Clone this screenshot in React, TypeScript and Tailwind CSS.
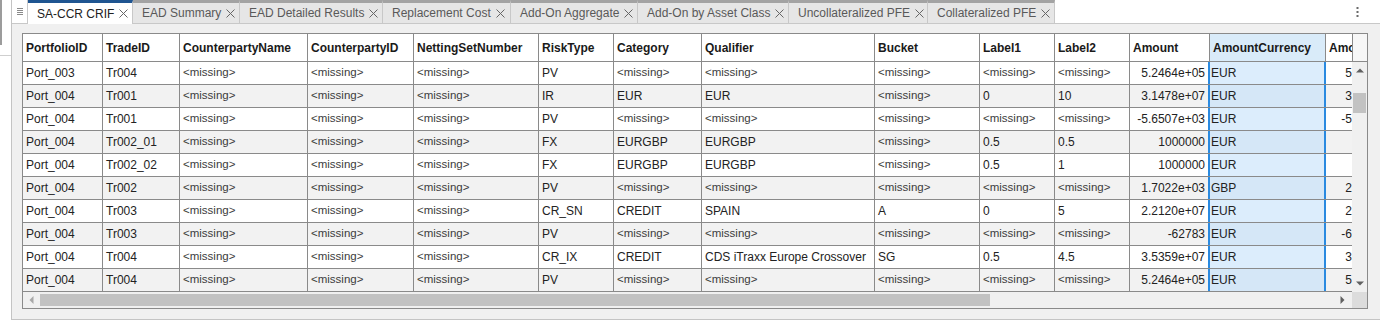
type Tab = { label: string; width: string; active?: boolean }

const tabs: Tab[] = [
  { label: 'SA-CCR CRIF', width: 'w-[105px]', active: true },
  { label: 'EAD Summary', width: 'w-[107px]' },
  { label: 'EAD Detailed Results', width: 'w-[143px]' },
  { label: 'Replacement Cost', width: 'w-[128px]' },
  { label: 'Add-On Aggregate', width: 'w-[127px]' },
  { label: 'Add-On by Asset Class', width: 'w-[151px]' },
  { label: 'Uncollateralized PFE', width: 'w-[139px]' },
  { label: 'Collateralized PFE', width: 'w-[127px]' }
]

type Column = { name: string; width: string; right?: boolean }

const columns: Column[] = [
  { name: 'PortfolioID', width: 'w-[80px]' },
  { name: 'TradeID', width: 'w-[77px]' },
  { name: 'CounterpartyName', width: 'w-[128px]' },
  { name: 'CounterpartyID', width: 'w-[106px]' },
  { name: 'NettingSetNumber', width: 'w-[125px]' },
  { name: 'RiskType', width: 'w-[75px]' },
  { name: 'Category', width: 'w-[88px]' },
  { name: 'Qualifier', width: 'w-[173px]' },
  { name: 'Bucket', width: 'w-[105px]' },
  { name: 'Label1', width: 'w-[75px]' },
  { name: 'Label2', width: 'w-[75px]' },
  { name: 'Amount', width: 'w-[80px]', right: true },
  { name: 'AmountCurrency', width: 'w-[116px]' },
  { name: 'AmountInBaseCurrency', width: 'w-[87px]', right: true }
]

const SELECTED = 12
const M = null

const rows: (string | null)[][] = [
  ['Port_003', 'Tr004', M, M, M, 'PV', M, M, M, M, M, '5.2464e+05', 'EUR', '5.2464e+05'],
  ['Port_004', 'Tr001', M, M, M, 'IR', 'EUR', 'EUR', M, '0', '10', '3.1478e+07', 'EUR', '3.1478e+07'],
  ['Port_004', 'Tr001', M, M, M, 'PV', M, M, M, M, M, '-5.6507e+03', 'EUR', '-5.6507e+03'],
  ['Port_004', 'Tr002_01', M, M, M, 'FX', 'EURGBP', 'EURGBP', M, '0.5', '0.5', '1000000', 'EUR', '1000000'],
  ['Port_004', 'Tr002_02', M, M, M, 'FX', 'EURGBP', 'EURGBP', M, '0.5', '1', '1000000', 'EUR', '1000000'],
  ['Port_004', 'Tr002', M, M, M, 'PV', M, M, M, M, M, '1.7022e+03', 'GBP', '2.0062e+03'],
  ['Port_004', 'Tr003', M, M, M, 'CR_SN', 'CREDIT', 'SPAIN', 'A', '0', '5', '2.2120e+07', 'EUR', '2.2120e+07'],
  ['Port_004', 'Tr003', M, M, M, 'PV', M, M, M, M, M, '-62783', 'EUR', '-6.2783e+04'],
  ['Port_004', 'Tr004', M, M, M, 'CR_IX', 'CREDIT', 'CDS iTraxx Europe Crossover', 'SG', '0.5', '4.5', '3.5359e+07', 'EUR', '3.5359e+07'],
  ['Port_004', 'Tr004', M, M, M, 'PV', M, M, M, M, M, '5.2464e+05', 'EUR', '5.2464e+05']
]

function Arrow({ dir, light }: { dir: 'up' | 'down' | 'left' | 'right'; light?: boolean }) {
  const fill = light ? '#a8a8a8' : '#606060'
  if (dir === 'up' || dir === 'down') {
    return (
      <svg width="8" height="5" viewBox="0 0 8 5">
        <polygon points={dir === 'up' ? '0,4.5 8,4.5 4,0.5' : '0,0.5 8,0.5 4,4.5'} fill={fill} />
      </svg>
    )
  }
  return (
    <svg width="5" height="8" viewBox="0 0 5 8">
      <polygon points={dir === 'left' ? '4.5,0 4.5,8 0.5,4' : '0.5,0 0.5,8 4.5,4'} fill={fill} />
    </svg>
  )
}

function CloseGlyph() {
  return (
    <svg width="9" height="9" viewBox="0 0 9 9" className="shrink-0">
      <g stroke="#666" strokeWidth="1">
        <line x1="0.5" y1="0.5" x2="8.5" y2="8.5" />
        <line x1="8.5" y1="0.5" x2="0.5" y2="8.5" />
      </g>
    </svg>
  )
}

function Cell({ value, col, index, even }: { value: string | null; col: Column; index: number; even: boolean }) {
  const selected = index === SELECTED
  let bg = even ? 'bg-[#f2f2f2]' : 'bg-white'
  if (selected) bg = even ? 'bg-[#d5e7f7]' : 'bg-[#dcedfc]'
  let border = 'border-r border-[#8a8a8a]'
  if (index === SELECTED - 1 || selected) border = 'border-r-2 border-r-[#2a8ae0]'
  return (
    <div
      className={`flex h-full shrink-0 items-center overflow-hidden whitespace-nowrap ${col.width} ${bg} ${border} ${
        col.right ? 'justify-end pr-[3px]' : selected ? 'pl-[1px]' : 'pl-[3px]'
      }`}
    >
      {value === null ? (
        <span className="text-[11.5px] text-[#3c3c3c]">&lt;missing&gt;</span>
      ) : (
        <span className="text-[12px] text-[#222]">{value}</span>
      )}
    </div>
  )
}

export default function App() {
  return (
    <div className="flex h-[321px] w-[1380px] bg-white font-['Liberation_Sans',Arial,sans-serif]">
      {/* fragment of neighbouring panel */}
      <div className="flex w-[11px] shrink-0 flex-col">
        <div className="h-[45px] border-l-2 border-[#9c9c9c]" />
        <div className="h-[10px]" />
        <div className="border-t border-[#cfcfcf]" />
      </div>

      <div className="flex h-[320px] flex-1 flex-col border-b border-l border-[#c4c4c4]">
        {/* Tab bar */}
        <div className="flex h-[24px] shrink-0 items-stretch">
          <div className="flex w-[16px] shrink-0 items-center justify-center border-r border-b border-[#c8c8c8]">
            <svg width="6" height="8" viewBox="0 0 6 8">
              <g stroke="#8a8a8a" strokeWidth="1">
                <line x1="0" y1="0.5" x2="6" y2="0.5" />
                <line x1="0" y1="2.5" x2="6" y2="2.5" />
                <line x1="0" y1="4.5" x2="6" y2="4.5" />
                <line x1="0" y1="6.5" x2="6" y2="6.5" />
              </g>
            </svg>
          </div>
          {tabs.map((tab) => (
            <div
              key={tab.label}
              className={`flex shrink-0 items-center gap-[5px] border-t-[3px] border-r border-r-[#c8c8c8] pl-[9px] text-[12px] ${tab.width} ${
                tab.active
                  ? 'border-t-[#1f5591] bg-white text-[#212121]'
                  : 'border-b border-b-[#c8c8c8] border-t-[#a3a3a3] bg-[#e6e6e6] text-[#595959]'
              }`}
            >
              <span className="whitespace-nowrap">{tab.label}</span>
              <CloseGlyph />
            </div>
          ))}
          <div className="flex flex-1 items-center justify-end border-b border-[#c8c8c8] pr-[21px]">
            <svg width="3" height="12" viewBox="0 0 3 12">
              <g fill="#6a6a6a">
                <rect x="0.5" y="1" width="2" height="2" />
                <rect x="0.5" y="5" width="2" height="2" />
                <rect x="0.5" y="9" width="2" height="2" />
              </g>
            </svg>
          </div>
        </div>

        {/* Content */}
        <div className="flex-1 bg-[#f0f0f0] pt-[9px] pl-[10px]">
          <div className="flex w-[1346px] flex-col border border-[#8a8a8a]">
            <div className="flex">
              {/* table viewport */}
              <div className="h-[258px] w-[1329px] overflow-hidden bg-white">
                <div className="flex h-[28px] w-max border-b border-[#8a8a8a]">
                  {columns.map((col, i) => (
                    <div
                      key={col.name}
                      className={`flex h-full shrink-0 items-center overflow-hidden whitespace-nowrap border-r border-[#8a8a8a] pl-[3px] text-[12px] font-bold text-[#1a1a1a] ${col.width} ${
                        i === SELECTED ? 'bg-[#d9ebf9]' : 'bg-white'
                      }`}
                    >
                      {col.name}
                    </div>
                  ))}
                </div>
                {rows.map((row, r) => (
                  <div key={r} className="flex h-[23px] w-max border-b border-[#8a8a8a]">
                    {row.map((value, i) => (
                      <Cell key={i} value={value} col={columns[i]} index={i} even={r % 2 === 1} />
                    ))}
                  </div>
                ))}
              </div>

              {/* vertical scrollbar */}
              <div className="flex w-[15px] flex-col">
                <div className="h-[28px] border-b border-l border-[#8a8a8a] bg-[#f7f7f7]" />
                <div className="flex flex-1 flex-col bg-[#f0f0f0]">
                  <div className="flex h-[17px] items-center justify-center">
                    <Arrow dir="up" />
                  </div>
                  <div className="mx-[1px] mt-[14px] h-[20px] bg-[#c2c2c2]" />
                  <div className="flex-1" />
                  <div className="flex h-[17px] items-center justify-center">
                    <Arrow dir="down" />
                  </div>
                </div>
              </div>
            </div>

            {/* horizontal scrollbar */}
            <div className="flex h-[16px]">
              <div className="flex w-[1329px] items-center bg-[#f0f0f0]">
                <div className="flex w-[17px] justify-center">
                  <Arrow dir="left" light />
                </div>
                <div className="h-[12px] w-[950px] bg-[#c2c2c2]" />
                <div className="flex-1" />
                <div className="flex w-[19px] justify-center">
                  <Arrow dir="right" />
                </div>
              </div>
              <div className="w-[15px] bg-[#dcdcdc]" />
            </div>
          </div>
        </div>
      </div>
    </div>
  )
}
